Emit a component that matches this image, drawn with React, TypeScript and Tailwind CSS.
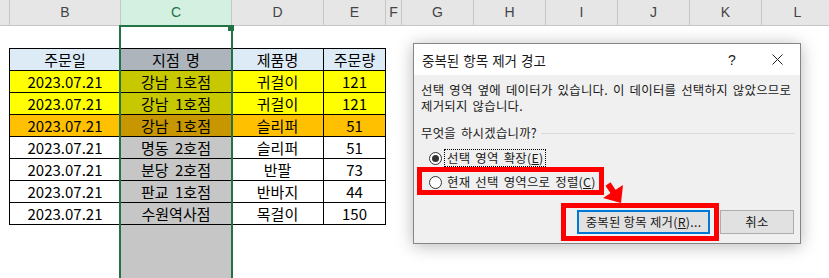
import React from 'react'

const KR = { fontFamily: '"Noto Sans CJK KR", "Noto Sans", sans-serif' }

const cols = [
  { l: '', w: 'w-[10px]' },
  { l: 'B', w: 'w-[111px]' },
  { l: 'C', w: 'w-[111px]', sel: true },
  { l: 'D', w: 'w-[92px]' },
  { l: 'E', w: 'w-[62px]' },
  { l: 'F', w: 'w-[16px]' },
  { l: 'G', w: 'w-[72px]' },
  { l: 'H', w: 'w-[72px]' },
  { l: 'I', w: 'w-[72px]' },
  { l: 'J', w: 'w-[72px]' },
  { l: 'K', w: 'w-[72px]' },
  { l: 'L', w: 'w-[72px]' },
]

type Row = { d: string; s: string; p: string; q: string; bg: string; sel: string }

const rows: Row[] = [
  { d: '2023.07.21', s: '강남 1호점', p: '귀걸이', q: '121', bg: 'bg-[#ffff00]', sel: 'bg-[#c8c800]' },
  { d: '2023.07.21', s: '강남 1호점', p: '귀걸이', q: '121', bg: 'bg-[#ffff00]', sel: 'bg-[#c8c800]' },
  { d: '2023.07.21', s: '강남 1호점', p: '슬리퍼', q: '51', bg: 'bg-[#ffc000]', sel: 'bg-[#c89600]' },
  { d: '2023.07.21', s: '명동 2호점', p: '슬리퍼', q: '51', bg: 'bg-white', sel: 'bg-[#c6c6c6]' },
  { d: '2023.07.21', s: '분당 2호점', p: '반팔', q: '73', bg: 'bg-white', sel: 'bg-[#c6c6c6]' },
  { d: '2023.07.21', s: '판교 1호점', p: '반바지', q: '44', bg: 'bg-white', sel: 'bg-[#c6c6c6]' },
  { d: '2023.07.21', s: '수원역사점', p: '목걸이', q: '150', bg: 'bg-white', sel: 'bg-[#c6c6c6]' },
]

const cell = 'h-[22px] border-r border-b border-black flex items-center justify-center text-[15px] leading-[22px] text-black [word-spacing:3px]'

function Radio({ checked }: { checked?: boolean }) {
  return (
    <span className="w-[13px] h-[13px] rounded-full border border-[#333] bg-white flex items-center justify-center shrink-0">
      {checked && <span className="w-[7px] h-[7px] rounded-full bg-[#333]" />}
    </span>
  )
}

function Dialog() {
  return (
    <div className="absolute left-[413px] top-[43px] w-[388px] h-[201px] border border-[#858585] bg-[#f0f0f0] shadow-[0_2px_16px_rgba(0,0,0,0.28)] flex flex-col text-[#1a1a1a]" style={KR}>
      {/* title bar */}
      <div className="h-[31px] bg-white flex items-center pl-[8px] shrink-0">
        <span className="text-[13.5px] leading-[16px] flex-1 [word-spacing:1px]">중복된 항목 제거 경고</span>
        <span className="text-[14px] leading-[16px] w-[20px] text-center mr-[30px]" style={{ fontFamily: '"Liberation Sans", sans-serif' }}>?</span>
        <svg width="11" height="11" viewBox="0 0 11 11" className="mr-[17px]">
          <path d="M0.5 0.5 L10.5 10.5 M10.5 0.5 L0.5 10.5" stroke="#222" strokeWidth="1" fill="none" />
        </svg>
      </div>
      {/* body */}
      <div className="pl-[7px] pt-[7px] text-[12.4px] leading-[16px] tracking-[0.25px] [word-spacing:2px]">
        <div className="h-[16px] whitespace-nowrap">선택 영역 옆에 데이터가 있습니다. 이 데이터를 선택하지 않았으므로</div>
        <div className="h-[16px]">제거되지 않습니다.</div>
      </div>
      <div className="mt-[11px] pl-[7px] pr-[5px] flex items-center gap-[4px] text-[12.4px] leading-[16px] tracking-[0.25px] [word-spacing:2px]">
        <span>무엇을 하시겠습니까?</span>
        <span className="flex-1 h-px bg-[#dadada]" />
      </div>
      <div className="mt-[5px] pl-[15px] text-[12.4px] leading-[16px] tracking-[0.25px] [word-spacing:2px]">
        <div className="h-[24px] flex items-center">
          <Radio checked />
          <span className="ml-[2px] px-[2px] border border-dotted border-black">선택 영역 확장(<span className="underline">E</span>)</span>
        </div>
        <div className="h-[24px] flex items-center">
          <Radio />
          <span className="ml-[2px] px-[2px] border border-transparent">현재 선택 영역으로 정렬(<span className="underline">C</span>)</span>
        </div>
      </div>
      <div className="mt-[16px] pr-[6px] flex justify-end gap-[10px] text-[12.4px] tracking-[0.25px] [word-spacing:2px]">
        <button className="w-[133px] h-[24px] border-2 border-[#0078d7] bg-[#e1e1e1] flex items-center justify-center leading-[16px] whitespace-nowrap">
          중복된 항목 제거(<span className="underline">R</span>)...
        </button>
        <button className="w-[74px] h-[24px] border border-[#adadad] bg-[#e1e1e1] flex items-center justify-center leading-[16px]">
          취소
        </button>
      </div>

      {/* callouts */}
      <div className="absolute left-[3px] top-[123px] w-[187px] h-[28px] border-[5px] border-[#ff0000]" />
      <div className="absolute left-[147px] top-[159px] w-[158px] h-[38px] border-[5px] border-[#ff0000]" />
      <svg className="absolute left-[186px] top-[136px]" width="28" height="28" viewBox="0 0 28 28">
        <path d="M8 4 L14 13" stroke="#ff0000" strokeWidth="6" fill="none" />
        <polygon points="3,18 23,5 21,23" fill="#ff0000" />
      </svg>
    </div>
  )
}

export default function App() {
  return (
    <div className="relative w-[829px] h-[278px] overflow-hidden bg-white flex flex-col">
      {/* column headers */}
      <div className="flex h-[26px] bg-[#e6e6e6] border-b border-[#c6c6c6] shrink-0" style={{ fontFamily: '"Liberation Sans", sans-serif' }}>
        {cols.map((c, i) => (
          <div
            key={i}
            className={`${c.w} shrink-0 h-full border-r border-[#c6c6c6] flex items-center justify-center text-[14px] ${c.sel ? 'bg-[#d3f0e0] text-[#217346]' : 'text-[#444]'}`}
          >
            {c.l}
          </div>
        ))}
      </div>

      {/* sheet body */}
      <div className="flex-1 flex flex-col" style={KR}>
        <div className="h-[22px] shrink-0" />
        <div className="ml-[9px] w-fit border-l border-t border-black grid grid-cols-[111px_111px_92px_62px]">
          <div className={`${cell} bg-[#ddebf7]`}>주문일</div>
          <div className={`${cell} bg-[#adb4bb]`}>지점 명</div>
          <div className={`${cell} bg-[#ddebf7]`}>제품명</div>
          <div className={`${cell} bg-[#ddebf7]`}>주문량</div>
          {rows.map((r, i) => (
            <React.Fragment key={i}>
              <div className={`${cell} ${r.bg}`}>{r.d}</div>
              <div className={`${cell} ${r.sel}`}>{r.s}</div>
              <div className={`${cell} ${r.bg}`}>{r.p}</div>
              <div className={`${cell} ${r.bg}`}>{r.q}</div>
            </React.Fragment>
          ))}
        </div>
        <div className="ml-[121px] w-[110px] flex-1 bg-[#c6c6c6]" />
      </div>

      {/* column C selection */}
      <div className="absolute left-[119px] top-[25px] w-[114px] h-[260px] border-2 border-[#217346]" />
      <div className="absolute left-[228px] top-[25px] w-[6px] h-[6px] bg-[#217346]" />

      <Dialog />
    </div>
  )
}
